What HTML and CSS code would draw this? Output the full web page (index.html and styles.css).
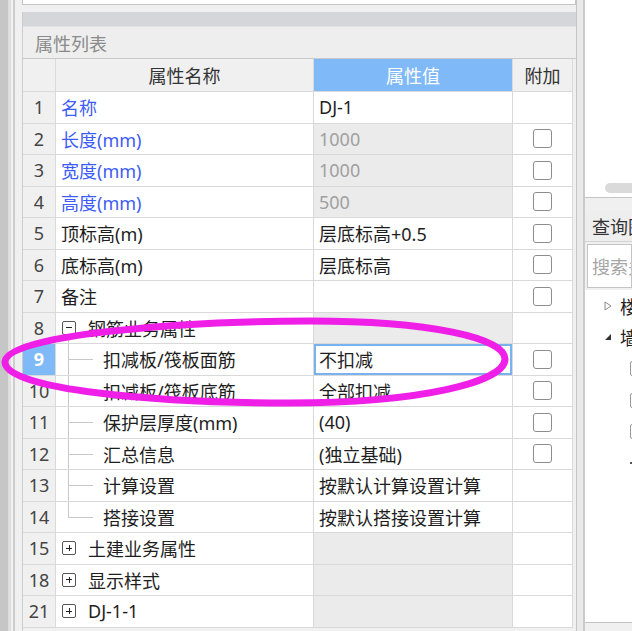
FILE: index.html
```html
<!DOCTYPE html>
<html lang="zh-CN">
<head>
<meta charset="utf-8">
<title>属性列表</title>
<link rel="stylesheet" href="styles.css">
</head>
<body>
<div class="app">
  <div class="leftstrip"><div class="ls-a"></div><div class="ls-b"></div><div class="ls-c"></div><div class="ls-d"></div><div class="ls-e"></div></div>
  <div class="main">
    <div class="topbox"></div>
    <div class="section">
      <div class="bar"></div>
      <div class="title">属性列表</div>
      <div class="grid">
        <div class="c h"></div>
        <div class="c h">属性名称</div>
        <div class="c h hv">属性值</div>
        <div class="c h">附加</div>

        <div class="c n">1</div>
        <div class="c nm blue">名称</div>
        <div class="c v">DJ-1</div>
        <div class="c a"></div>

        <div class="c n">2</div>
        <div class="c nm blue">长度(mm)</div>
        <div class="c v dis">1000</div>
        <div class="c a"><span class="cb"></span></div>

        <div class="c n">3</div>
        <div class="c nm blue">宽度(mm)</div>
        <div class="c v dis">1000</div>
        <div class="c a"><span class="cb"></span></div>

        <div class="c n">4</div>
        <div class="c nm blue">高度(mm)</div>
        <div class="c v dis">500</div>
        <div class="c a"><span class="cb"></span></div>

        <div class="c n">5</div>
        <div class="c nm">顶标高(m)</div>
        <div class="c v">层底标高+0.5</div>
        <div class="c a"><span class="cb"></span></div>

        <div class="c n">6</div>
        <div class="c nm">底标高(m)</div>
        <div class="c v">层底标高</div>
        <div class="c a"><span class="cb"></span></div>

        <div class="c n">7</div>
        <div class="c nm">备注</div>
        <div class="c v"></div>
        <div class="c a"><span class="cb"></span></div>

        <div class="c n">8</div>
        <div class="c nm grp open"><span class="box"></span>钢筋业务属性</div>
        <div class="c v dis"></div>
        <div class="c a"></div>

        <div class="c n seln">9</div>
        <div class="c nm ch">扣减板/筏板面筋</div>
        <div class="c v selv">不扣减</div>
        <div class="c a"><span class="cb"></span></div>

        <div class="c n">10</div>
        <div class="c nm ch">扣减板/筏板底筋</div>
        <div class="c v">全部扣减</div>
        <div class="c a"><span class="cb"></span></div>

        <div class="c n">11</div>
        <div class="c nm ch">保护层厚度(mm)</div>
        <div class="c v">(40)</div>
        <div class="c a"><span class="cb"></span></div>

        <div class="c n">12</div>
        <div class="c nm ch">汇总信息</div>
        <div class="c v">(独立基础)</div>
        <div class="c a"><span class="cb"></span></div>

        <div class="c n">13</div>
        <div class="c nm ch">计算设置</div>
        <div class="c v">按默认计算设置计算</div>
        <div class="c a"></div>

        <div class="c n">14</div>
        <div class="c nm ch last">搭接设置</div>
        <div class="c v">按默认搭接设置计算</div>
        <div class="c a"></div>

        <div class="c n">15</div>
        <div class="c nm grp"><span class="box plus"></span>土建业务属性</div>
        <div class="c v dis"></div>
        <div class="c a"></div>

        <div class="c n">18</div>
        <div class="c nm grp"><span class="box plus"></span>显示样式</div>
        <div class="c v dis"></div>
        <div class="c a"></div>

        <div class="c n">21</div>
        <div class="c nm grp"><span class="box plus"></span>DJ-1-1</div>
        <div class="c v dis"></div>
        <div class="c a"></div>
      </div>
    </div>
  </div>
  <div class="sep"></div>
  <div class="right">
    <div class="rtop"><div class="thumb"></div></div>
    <div class="rgap"></div>
    <div class="rq">
      <div class="qhead">查询图元</div>
      <div class="qsearch">搜索关键字</div>
      <div class="qtree">
        <div class="ti"><svg class="tri" width="8" height="10" viewBox="0 0 8 10"><path d="M1 1 L7 5 L1 9 Z" fill="none" stroke="#8a8a8a" stroke-width="1"/></svg><span>楼层</span></div>
        <div class="ti"><svg class="tri" width="8" height="10" viewBox="0 0 8 10"><path d="M1 8 L7 8 L7 2 Z" fill="#333"/></svg><span>墙</span></div>
        <div class="ti sub"><span class="mini"></span></div>
        <div class="ti sub"><span class="mini"></span></div>
        <div class="ti sub"><span class="mini"></span></div>
        <div class="ti sub"><span class="dot"></span></div>
      </div>
    </div>
  </div>
</div>
<svg class="mark" width="632" height="631" viewBox="0 0 632 631">
  <path d="M5 362 C5 335 180 321 310 321 C430 321 505 338 505 359 C505 382 420 403 290 403 C160 403 5 390 5 362 Z" fill="none" stroke="#ef1fe8" stroke-width="7"/>
</svg>
</body>
</html>
```

FILE: styles.css
```css
* { box-sizing: border-box; margin: 0; padding: 0; }
html, body { width: 632px; height: 631px; overflow: hidden; }
body {
  font-family: "Noto Sans", "Noto Sans CJK SC", sans-serif;
  font-size: 18px;
  color: #1e1e1e;
  background: #f0f0f0;
  position: relative;
}
.app { display: flex; height: 631px; }

.leftstrip { width: 22px; flex-shrink: 0; display: flex; }
.ls-a { width: 8px; background: #c6c6c6; }
.ls-b { width: 3px; background: #dedede; }
.ls-c { width: 2px; background: #f2f2f2; }
.ls-d { width: 2px; background: #cdcdcd; }
.ls-e { width: 7px; background: #f0f0f0; }

.main { width: 554px; flex-shrink: 0; display: flex; flex-direction: column; }
.topbox { height: 5px; background: #fff; border: 1px solid #c4c4c4; border-top: none; margin-bottom: 7px; }
.section { flex: 1; border-left: 1px solid #cccccc; display: flex; flex-direction: column; background: #f0f0f0; }
.bar { height: 14px; background: #d5d6da; }
.title {
  height: 33px; background: #eeeeee;
  border-top: 1px solid #e2e2e2; border-bottom: 1px solid #c9c9c9;
  padding-left: 12px; color: #8a8a8a;
  display: flex; align-items: center;
}

.grid {
  display: grid;
  grid-template-columns: 33px 258px 199px 60px;
  grid-template-rows: 33px;
  grid-auto-rows: 31.5px;
  width: 550px;
}
.c {
  border-right: 1px solid #d9d9d9;
  border-bottom: 1px solid #d9d9d9;
  display: flex; align-items: center;
  white-space: nowrap; overflow: hidden;
  position: relative;
}
.h { background: #f0f0f0; justify-content: center; color: #333; }
.hv { background: #80b9f7; color: #fff; }
.n { background: #f0f0f0; justify-content: center; color: #444; }
.seln { background: #80b9f7; color: #fff; font-weight: bold; }
.nm { background: #fff; padding-left: 5px; }
.blue { color: #3d5cf5; }
.v { background: #fff; padding-left: 5px; }
.dis { background: #ebebeb; color: #a0a0a0; }
.selv { box-shadow: inset 0 0 0 2px #78b2ef; }
.a { background: #fff; justify-content: center; }
.cb {
  width: 19px; height: 19px;
  border: 1.5px solid #8d8d8d; border-radius: 3px;
  background: #fff;
}

.grp { padding-left: 6px; }
.box {
  width: 14px; height: 14px; flex-shrink: 0;
  border: 1px solid #555; border-radius: 2px;
  margin-right: 12px; position: relative;
}
.box::before {
  content: ""; position: absolute;
  left: 3px; right: 3px; top: 5.5px; height: 1px; background: #222;
}
.box.plus::after {
  content: ""; position: absolute;
  top: 3px; bottom: 3px; left: 5.5px; width: 1px; background: #222;
}
.grp.open::after {
  content: ""; position: absolute;
  left: 12px; top: calc(50% + 8px); bottom: 0; width: 1px; background: #c8c8c8;
}

.ch { padding-left: 47px; }
.ch::before {
  content: ""; position: absolute;
  left: 12px; top: 0; bottom: -1px; width: 1px; background: #c8c8c8;
}
.ch.last::before { bottom: 50%; }
.ch::after {
  content: ""; position: absolute;
  left: 12px; top: 50%; width: 25px; height: 1px; background: #c8c8c8;
}

.sep { width: 7px; flex-shrink: 0; background: #e9e9e9; border-left: 1px solid #c4c4c4; }
.right { width: 49px; flex-shrink: 0; display: flex; flex-direction: column; border-left: 2px solid #cbcbcb; }
.rtop {
  height: 198px; background: #fff;
  border-bottom: 1px solid #c4c4c4;
  display: flex; flex-direction: column; justify-content: flex-end;
  padding-bottom: 4px;
}
.thumb { width: 40px; height: 10px; margin-left: 20px; border-radius: 5px; background: #dadada; }
.rgap { height: 13px; }
.rq { flex: 1; display: flex; flex-direction: column; margin-bottom: 8px; }
.qhead {
  height: 31px; background: #eeeeee; border-radius: 3px 0 0 0;
  border-bottom: 1px solid #d2d2d2;
  padding-left: 7px; color: #333;
  display: flex; align-items: center; white-space: nowrap; overflow: hidden;
}
.qsearch {
  height: 44px; margin: 2px 0 2px 2px;
  border: 1px solid #c4c4c4; background: #fff; color: #a6a6a6;
  padding-left: 4px; display: flex; align-items: center;
  white-space: nowrap; overflow: hidden;
}
.qtree { flex: 1; background: #fff; border-bottom: 1px solid #c4c4c4; padding-top: 0; overflow: hidden; }
.ti { height: 31.5px; display: flex; align-items: center; white-space: nowrap; padding-left: 19px; color: #222; }
.tri { flex-shrink: 0; margin-right: 8px; }
.ti.sub { padding-left: 45px; }
.mini { width: 14px; height: 15px; border: 1px solid #9a9a9a; border-radius: 2px; flex-shrink: 0; }
.dot { width: 2px; height: 2px; background: #555; flex-shrink: 0; }

.mark { position: absolute; left: 0; top: 0; pointer-events: none; }
```
